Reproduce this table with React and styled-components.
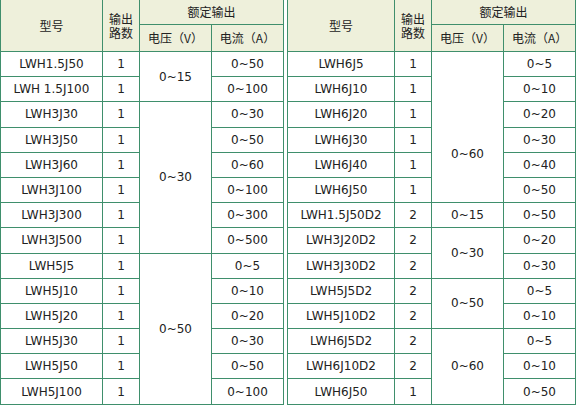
import styled, { createGlobalStyle } from "styled-components";

const GlobalStyle = createGlobalStyle`
  body {
    margin: 0;
    background: #ffffff;
    font-family: "DejaVu Sans", "Noto Sans CJK SC", sans-serif;
  }
`;

const Page = styled.div`
  display: flex;
  gap: 3px;
  align-items: flex-start;
  margin-top: -1px;
`;

const Table = styled.table`
  border-collapse: collapse;
  table-layout: fixed;
  width: ${(p) => p.$width}px;
  font-size: 12px;
  color: #222;
`;

const Th = styled.th`
  background: #eef0db;
  border: 1px solid #3f8f6c;
  font-weight: normal;
  font-family: "Noto Sans CJK SC", "DejaVu Sans", sans-serif;
  font-size: 12px;
  line-height: 14px;
  text-align: center;
  vertical-align: middle;
  padding: 0;
`;

const Td = styled.td`
  border: 1px solid #3f8f6c;
  text-align: center;
  vertical-align: middle;
  padding: 0;
  padding-top: ${(p) => p.$shift || 0}px;
  white-space: nowrap;
`;

const HeadRow = styled.tr`
  height: ${(p) => p.$h}px;
`;

const Row = styled.tr`
  height: 25.2px;
`;

const leftRows = [
  ["LWH1.5J50", "1", { v: "0~15", span: 2 }, "0~50"],
  ["LWH 1.5J100", "1", null, "0~100"],
  ["LWH3J30", "1", { v: "0~30", span: 6 }, "0~30"],
  ["LWH3J50", "1", null, "0~50"],
  ["LWH3J60", "1", null, "0~60"],
  ["LWH3J100", "1", null, "0~100"],
  ["LWH3J300", "1", null, "0~300"],
  ["LWH3J500", "1", null, "0~500"],
  ["LWH5J5", "1", { v: "0~50", span: 6 }, "0~5"],
  ["LWH5J10", "1", null, "0~10"],
  ["LWH5J20", "1", null, "0~20"],
  ["LWH5J30", "1", null, "0~30"],
  ["LWH5J50", "1", null, "0~50"],
  ["LWH5J100", "1", null, "0~100"],
];

const rightRows = [
  ["LWH6J5", "1", { v: "0~60", span: 6, shift: 54 }, "0~5"],
  ["LWH6J10", "1", null, "0~10"],
  ["LWH6J20", "1", null, "0~20"],
  ["LWH6J30", "1", null, "0~30"],
  ["LWH6J40", "1", null, "0~40"],
  ["LWH6J50", "1", null, "0~50"],
  ["LWH1.5J50D2", "2", { v: "0~15", span: 1 }, "0~50"],
  ["LWH3J20D2", "2", { v: "0~30", span: 2 }, "0~20"],
  ["LWH3J30D2", "2", null, "0~30"],
  ["LWH5J5D2", "2", { v: "0~50", span: 2 }, "0~5"],
  ["LWH5J10D2", "2", null, "0~10"],
  ["LWH6J5D2", "2", { v: "0~60", span: 3 }, "0~5"],
  ["LWH6J10D2", "2", null, "0~10"],
  ["LWH6J50", "1", null, "0~50"],
];

function SpecTable({ cols, rows }) {
  const width = cols.reduce((a, b) => a + b, 0) + 1;
  return (
    <Table $width={width}>
      <colgroup>
        {cols.map((c, i) => (
          <col key={i} style={{ width: c }} />
        ))}
      </colgroup>
      <thead>
        <HeadRow $h={25}>
          <Th rowSpan={2}>型号</Th>
          <Th rowSpan={2}>
            输出
            <br />
            路数
          </Th>
          <Th colSpan={2}>额定输出</Th>
        </HeadRow>
        <HeadRow $h={27}>
          <Th>电压（V）</Th>
          <Th>电流（A）</Th>
        </HeadRow>
      </thead>
      <tbody>
        {rows.map((r, i) => (
          <Row key={i}>
            <Td>{r[0]}</Td>
            <Td>{r[1]}</Td>
            {r[2] && (
              <Td rowSpan={r[2].span} $shift={r[2].shift}>
                {r[2].v}
              </Td>
            )}
            <Td>{r[3]}</Td>
          </Row>
        ))}
      </tbody>
    </Table>
  );
}

export default function App() {
  return (
    <>
      <GlobalStyle />
      <Page>
        <SpecTable cols={[102, 37, 72, 72]} rows={leftRows} />
        <SpecTable cols={[107, 37, 72, 72]} rows={rightRows} />
      </Page>
    </>
  );
}
